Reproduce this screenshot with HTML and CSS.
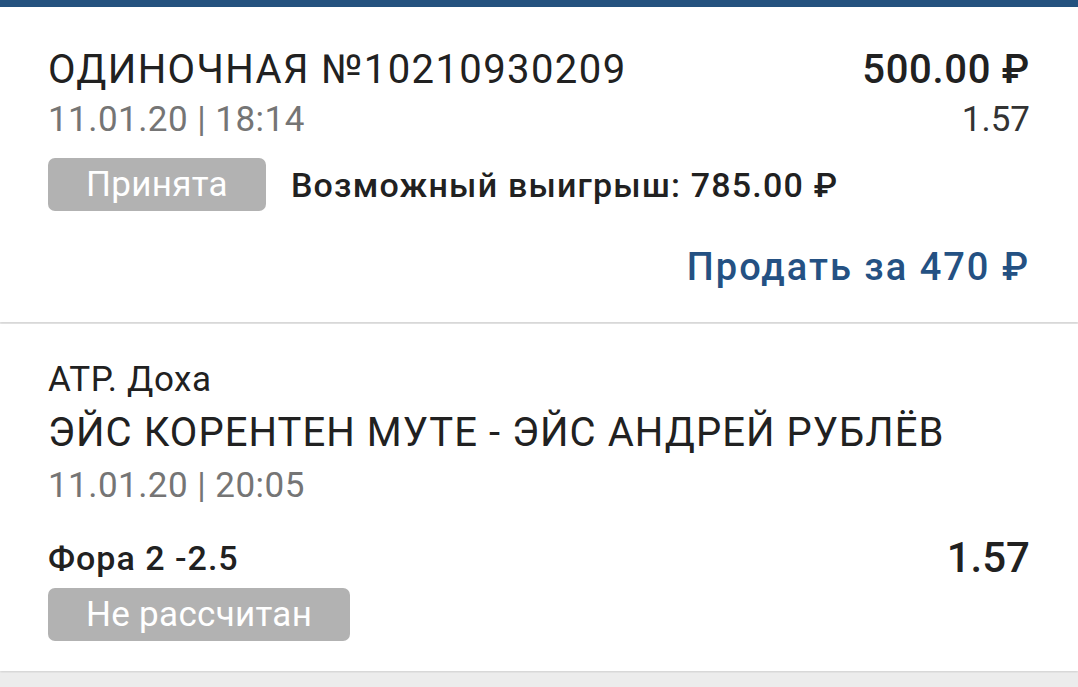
FILE: index.html
```html
<!DOCTYPE html>
<html lang="ru">
<head>
    <meta charset="UTF-8">
    <meta name="viewport" content="width=device-width, initial-scale=1.0">
    <title>Ставка №10210930209</title>
    <link rel="stylesheet" href="styles.css">
</head>
<body>
    <div class="topbar"></div>

    <div class="card bet">
        <div class="row">
            <div class="title">ОДИНОЧНАЯ №10210930209</div>
            <div class="amount">500.00 ₽</div>
        </div>
        <div class="row">
            <div class="date">11.01.20 | 18:14</div>
            <div class="odds">1.57</div>
        </div>
        <div class="status">
            <span class="badge">Принята</span>
            <span class="win">Возможный выигрыш: 785.00 ₽</span>
        </div>
        <div class="sell"><a href="#">Продать за 470 ₽</a></div>
    </div>

    <div class="card event">
        <div class="league">АТР. Доха</div>
        <div class="match">ЭЙС КОРЕНТЕН МУТЕ - ЭЙС АНДРЕЙ РУБЛЁВ</div>
        <div class="date">11.01.20 | 20:05</div>
        <div class="row outcome">
            <div class="market">Фора 2 -2.5</div>
            <div class="coef">1.57</div>
        </div>
        <span class="badge">Не рассчитан</span>
    </div>
</body>
</html>
```

FILE: styles.css
```css
body {
    margin: 0;
    font-family: 'Roboto', 'Noto Sans', sans-serif;
    background: #ececec;
    color: #212121;
}
.topbar {
    height: 7px;
    background: #24527f;
}
.card {
    background: #ffffff;
    padding: 0 48px;
    margin-bottom: 2px;
    box-shadow: 0 1px 2px rgba(0, 0, 0, 0.12);
}
.row {
    display: flex;
    justify-content: space-between;
    align-items: center;
}

/* bet card */
.bet {
    padding-top: 38px;
    padding-bottom: 30px;
}
.title {
    font-size: 40px;
    line-height: 50px;
    letter-spacing: 1.4px;
}
.amount {
    font-size: 40px;
    font-weight: 500;
    line-height: 50px;
    letter-spacing: 0.7px;
}
.date {
    font-size: 35px;
    line-height: 50px;
    color: #757575;
    letter-spacing: 0.45px;
}
.odds {
    font-size: 35px;
    line-height: 50px;
    color: #333;
}
.status {
    display: flex;
    align-items: center;
    gap: 25px;
    margin-top: 13px;
}
.badge {
    display: inline-block;
    background: #b2b2b2;
    color: #ffffff;
    font-size: 35px;
    line-height: 53px;
    padding: 0 38px;
    border-radius: 7px;
    letter-spacing: 0.3px;
}
.win {
    font-size: 34px;
    font-weight: 500;
    letter-spacing: 1.2px;
}
.sell {
    text-align: right;
    margin-top: 31px;
    font-size: 38px;
    font-weight: 500;
    line-height: 50px;
    letter-spacing: 2px;
}
.sell a {
    color: #245183;
    text-decoration: none;
}

/* event card */
.event {
    padding-top: 34px;
    padding-bottom: 30px;
}
.league {
    font-size: 35px;
    line-height: 44px;
    letter-spacing: 0.6px;
}
.match {
    font-size: 40px;
    line-height: 62px;
    letter-spacing: 1.05px;
}
.event .date {
    line-height: 44px;
}
.outcome {
    margin-top: 25px;
    line-height: 50px;
}
.market {
    font-size: 34px;
    font-weight: 500;
    letter-spacing: 1px;
}
.coef {
    font-size: 42px;
    font-weight: 500;
}
.event .badge {
    margin-top: 5px;
}
```
